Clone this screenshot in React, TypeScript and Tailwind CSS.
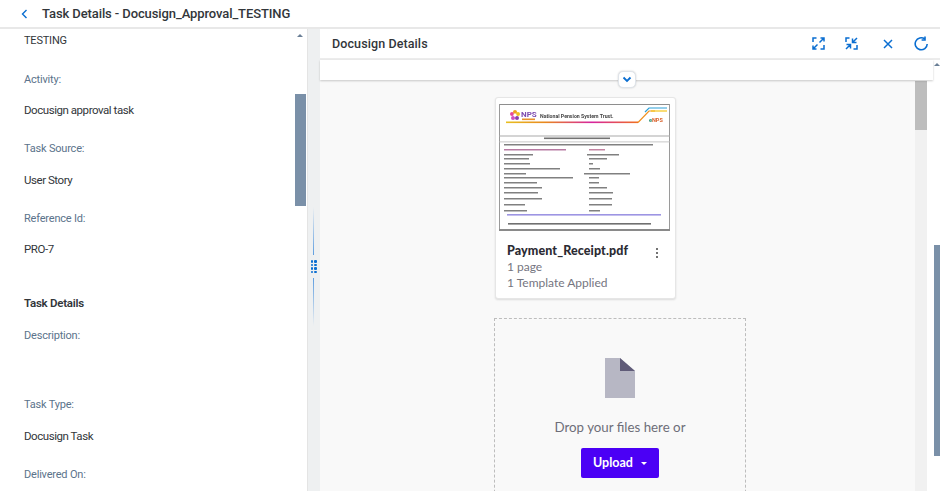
import React from "react";

const sans = "font-['Roboto',sans-serif]";
const card = "font-['Lato',sans-serif]";

function Field({ label, value, labelClass, valueClass }: { label: string; value?: string; labelClass: string; valueClass?: string }) {
  return (
    <>
      <div className={`text-[11px] leading-[16px] tracking-[-0.2px] text-[#5b738b] ${labelClass}`}>{label}</div>
      {value && <div className={`text-[11.5px] leading-[16px] tracking-[-0.45px] text-[#32363a] ${valueClass ?? ""}`}>{value}</div>}
    </>
  );
}

const rows: [number, number, number, number, number, string, string][] = [
  [41, 5, 149, 0, 0, "#333", "#333"],
  [46, 5, 62, 90, 16, "#8a2a6a", "#a03a6a"],
  [51, 5, 29, 88, 32, "#333", "#333"],
  [55, 5, 25, 90, 18, "#333", "#333"],
  [60, 5, 26, 90, 4, "#333", "#333"],
  [65, 5, 56, 90, 11, "#333", "#333"],
  [70, 5, 22, 85, 46, "#333", "#333"],
  [74, 5, 69, 90, 10, "#333", "#333"],
  [79, 5, 33, 90, 10, "#333", "#333"],
  [84, 5, 38, 90, 18, "#333", "#333"],
  [89, 5, 34, 90, 24, "#333", "#333"],
  [95, 5, 38, 90, 23, "#333", "#333"],
  [101, 5, 21, 90, 23, "#333", "#333"],
  [107, 5, 23, 90, 11, "#333", "#333"],
];

function Thumb() {
  return (
    <svg width="172" height="128" viewBox="0 0 172 128" className="block blur-[0.35px]">
      <rect x="0" y="0" width="172" height="128" fill="#fff" />
      <rect x="0" y="1" width="171" height="1" fill="#8e8e8e" />
      <rect x="0" y="1" width="1" height="126" fill="#9a9a9a" />
      <rect x="170" y="1" width="1" height="126" fill="#9a9a9a" />
      <rect x="0" y="126" width="171" height="2" fill="#8a8a8a" />
      <g>
        <circle cx="13" cy="11" r="2" fill="#e6499b" />
        <circle cx="16" cy="9" r="2" fill="#f0a020" />
        <circle cx="19" cy="11" r="2" fill="#f0c020" />
        <circle cx="18" cy="15" r="2" fill="#8a3fb0" />
        <circle cx="14" cy="15" r="2" fill="#d04fc0" />
        <circle cx="16" cy="12" r="1.4" fill="#fff" />
      </g>
      <text x="22" y="14" fontSize="8" fontWeight="700" fill="#7c4bb0" fontFamily="Roboto, sans-serif">NPS</text>
      <rect x="23" y="15.5" width="13" height="1.6" fill="#e89030" />
      <text x="41" y="15" fontSize="5.2" fontWeight="700" fill="#444" fontFamily="Roboto, sans-serif">National Pension System Trust.</text>
      <defs>
        <linearGradient id="g" x1="0" x2="1" y1="0" y2="0">
          <stop offset="0" stopColor="#e8c020" />
          <stop offset="0.3" stopColor="#e8871e" />
          <stop offset="0.65" stopColor="#d6249f" />
          <stop offset="1" stopColor="#f07020" />
        </linearGradient>
      </defs>
      <rect x="7" y="18.5" width="132" height="1.6" fill="url(#g)" />
      <path d="M139 19.5 L150 8 L156 8" fill="none" stroke="#f09020" strokeWidth="1.2" />
      <path d="M146 9 L150 5 L168 5" fill="none" stroke="#2aa0d8" strokeWidth="1.2" />
      <path d="M152 8 L168 8" fill="none" stroke="#f5c518" strokeWidth="1.2" />
      <text x="150" y="19" fontSize="5.5" fontWeight="700" fontFamily="Roboto, sans-serif">
        <tspan fill="#1a8a6a">e</tspan>
        <tspan fill="#d8602a">NPS</tspan>
      </text>
      <rect x="0" y="32.5" width="171" height="1" fill="#aaa" />
      <rect x="45" y="34.5" width="66" height="1.6" fill="#444" opacity="0.75" />
      <rect x="0" y="38.5" width="171" height="0.8" fill="#bbb" />
      {rows.map((r, i) => (
        <g key={i} opacity="0.62">
          <rect x={r[1]} y={r[0]} width={r[2]} height="1.5" fill={r[5]} />
          {r[4] > 0 && <rect x={r[3]} y={r[0]} width={r[4]} height="1.5" fill={r[6]} />}
        </g>
      ))}
      <rect x="8" y="111" width="154" height="1.6" fill="#5b4fd0" opacity="0.6" />
      <rect x="9" y="120" width="143" height="1.6" fill="#333" opacity="0.7" />
    </svg>
  );
}

function Icons() {
  const s = { fill: "none", stroke: "#0a6ed1", strokeWidth: 1.5 };
  return (
    <div className="flex items-center pr-[11px]">
      <svg width="13" height="13" viewBox="0 0 13 13" className="mr-[20px]" {...s}>
        <path d="M1 5V1h3.5M12 8v4H8.5" />
        <path d="M7.5 5.5 L11.5 1.5M8.5 1h3.5v3.5M5.5 7.5 L1.5 11.5M1 8.5V12h3.5" />
      </svg>
      <svg width="13" height="13" viewBox="0 0 13 13" className="mr-[25px]" {...s}>
        <path d="M1 5V1h3.5M12 8v4H8.5" />
        <path d="M12 1 L8 5M7.5 1.5V5.5H11.5M1 12 L5 8M1.5 7.5H5.5V11.5" />
      </svg>
      <svg width="10" height="10" viewBox="0 0 10 10" className="mr-[21px]" {...s}>
        <path d="M1 1l8 8M9 1l-8 8" />
      </svg>
      <svg width="15" height="15" viewBox="0 0 15 15" {...s} strokeWidth={1.6}>
        <path d="M13.2 8A6 6 0 1 1 10.8 3" />
        <path d="M11 0.6V4H7.6" />
      </svg>
    </div>
  );
}

export default function App() {
  return (
    <div className={`w-[940px] h-[491px] overflow-hidden flex flex-col bg-white ${sans}`}>
      <header className="h-[27px] shrink-0 flex items-center bg-white">
        <svg width="7" height="10" viewBox="0 0 7 10" className="ml-[21px] mr-[14px]" fill="none" stroke="#0a6ed1" strokeWidth="1.4">
          <path d="M5.5 1L1.5 5l4 4" />
        </svg>
        <h1 className="text-[13px] leading-none font-medium text-[#32363a] tracking-[-0.1px]">Task Details - Docusign_Approval_TESTING</h1>
      </header>
      <div className="flex-1 min-h-0 flex border-t-2 border-[#e8e8e8]">
        <aside className="w-[307px] shrink-0 relative overflow-hidden pl-[24px]">
          <div className="absolute right-[1px] top-[65px] w-[11px] h-[112px] bg-[#7a90a8]" />
          <div className="absolute right-[4px] top-[5px] w-0 h-0 border-x-[3px] border-x-transparent border-b-[3px] border-b-[#6a7f96]" />
          <Field label="TESTING" labelClass="!text-[#32363a] pt-[4px]" />
          <Field label="Activity:" value="Docusign approval task" labelClass="mt-[23px]" valueClass="mt-[14px]" />
          <Field label="Task Source:" value="User Story" labelClass="mt-[23px]" valueClass="mt-[15px]" />
          <Field label="Reference Id:" value="PRO-7" labelClass="mt-[23px]" valueClass="mt-[14px]" />
          <div className="mt-[38px] text-[11.5px] leading-[16px] font-semibold tracking-[-0.25px] text-[#32363a]">Task Details</div>
          <Field label="Description:" labelClass="mt-[17px]" />
          <Field label="Task Type:" value="Docusign Task" labelClass="mt-[53px]" valueClass="mt-[15px]" />
          <Field label="Delivered On:" labelClass="mt-[23px]" />
        </aside>
        <div className="w-[13px] shrink-0 bg-[#eef0f1] border-l border-[#e4e4e4] flex flex-col items-center pt-[178px] pr-[1px]">
          <div className="w-px h-[48px] bg-gradient-to-b from-transparent to-[#5f9ee0]" />
          <div className="grid grid-cols-2 gap-[1px] my-[5px]">
            {Array.from({ length: 8 }).map((_, i) => (
              <span key={i} className="w-[2.5px] h-[2.5px] bg-[#0a6ed1] rounded-[1px]" />
            ))}
          </div>
          <div className="w-px h-[48px] bg-gradient-to-t from-transparent to-[#5f9ee0]" />
        </div>
        <main className="flex-1 min-w-0 flex flex-col relative">
          <div className="h-[31px] shrink-0 flex items-center justify-between pl-[12px] bg-white border-b-2 border-[#ececec]">
            <h2 className="pt-[1px] text-[12.5px] font-medium text-[#32363a] tracking-[0.1px]">Docusign Details</h2>
            <Icons />
          </div>
          <div className="flex-1 min-h-0 flex relative">
            <div className="absolute left-0 top-0 w-[613px] h-[20px] bg-white shadow-[0_1px_2px_rgba(0,0,0,0.2)] z-10" />
            <div className="absolute z-20 left-[298px] top-[11px] w-[18px] h-[17px] bg-white border border-[#dfe4ea] rounded-[5px] shadow-[0_0_2px_rgba(0,0,0,0.2)] flex items-center justify-center">
              <svg width="10" height="7" viewBox="0 0 10 7" fill="none" stroke="#0a6ed1" strokeWidth="1.8">
                <path d="M1.5 1.5L5 5l3.5-3.5" />
              </svg>
            </div>
            <div className={`w-[607px] shrink-0 bg-[#f9f9f9] flex relative overflow-hidden pt-[20px] ${card}`}>
              <div className="flex-1 flex flex-col pl-[174px] pt-[17px]">
                <section className="ml-[1px] w-[181px] h-[202px] bg-white rounded-[3px] border border-[#e6e6e6] shadow-[0_1px_2px_rgba(0,0,0,0.12)] shrink-0 pt-[5px] px-[3px]">
                  <Thumb />
                  <div className="relative pl-[8px] pt-[11px]">
                    <div className="text-[12.5px] leading-[17px] font-black text-[#2b2b33] tracking-[0.1px]">Payment_Receipt.pdf</div>
                    <div className="text-[12px] leading-[16px] text-[#75757f]">1 page</div>
                    <div className="text-[12px] leading-[15px] text-[#75757f]">1 Template Applied</div>
                    <div className="absolute right-[14px] top-[17px] flex flex-col gap-[2px]">
                      <span className="w-[2px] h-[2px] bg-[#444] rounded-full" />
                      <span className="w-[2px] h-[2px] bg-[#444] rounded-full" />
                      <span className="w-[2px] h-[2px] bg-[#444] rounded-full" />
                    </div>
                  </div>
                </section>
                <section className="mt-[19px] w-[252px] h-[200px] shrink-0 border border-dashed border-[#bdbdbd] flex flex-col items-center pt-[39px]">
                  <svg width="30" height="40" viewBox="0 0 30 40">
                    <path d="M0 0H15L30 13V40H0Z" fill="#b7b7c4" />
                    <path d="M15 0L30 13H15Z" fill="#5f5b78" />
                  </svg>
                  <div className="mt-[20px] text-[13.3px] leading-[18px] text-[#6e6e78]">Drop your files here or</div>
                  <button className="mt-[12px] w-[78px] h-[30px] bg-[#4b00f5] rounded-[2px] text-white text-[12.5px] font-bold flex items-center justify-center gap-[8px]">
                    Upload
                    <span className="w-0 h-0 border-x-[3px] border-x-transparent border-t-[3px] border-t-white" />
                  </button>
                </section>
              </div>
              <div className="absolute right-0 top-[21px] bottom-0 w-[12px] bg-[#f1f1f1]">
                <div className="h-[49px] bg-[#bdbdbd]" />
              </div>
            </div>
            <div className="flex-1 bg-white relative">
              <div className="absolute right-0 top-[185px] w-[6px] h-[211px] bg-[#7a90a8]" />
              <div className="absolute right-0 top-[3px] w-0 h-0 border-x-[3px] border-x-transparent border-b-[3px] border-b-[#6a7f96]" />
            </div>
          </div>
        </main>
      </div>
    </div>
  );
}
